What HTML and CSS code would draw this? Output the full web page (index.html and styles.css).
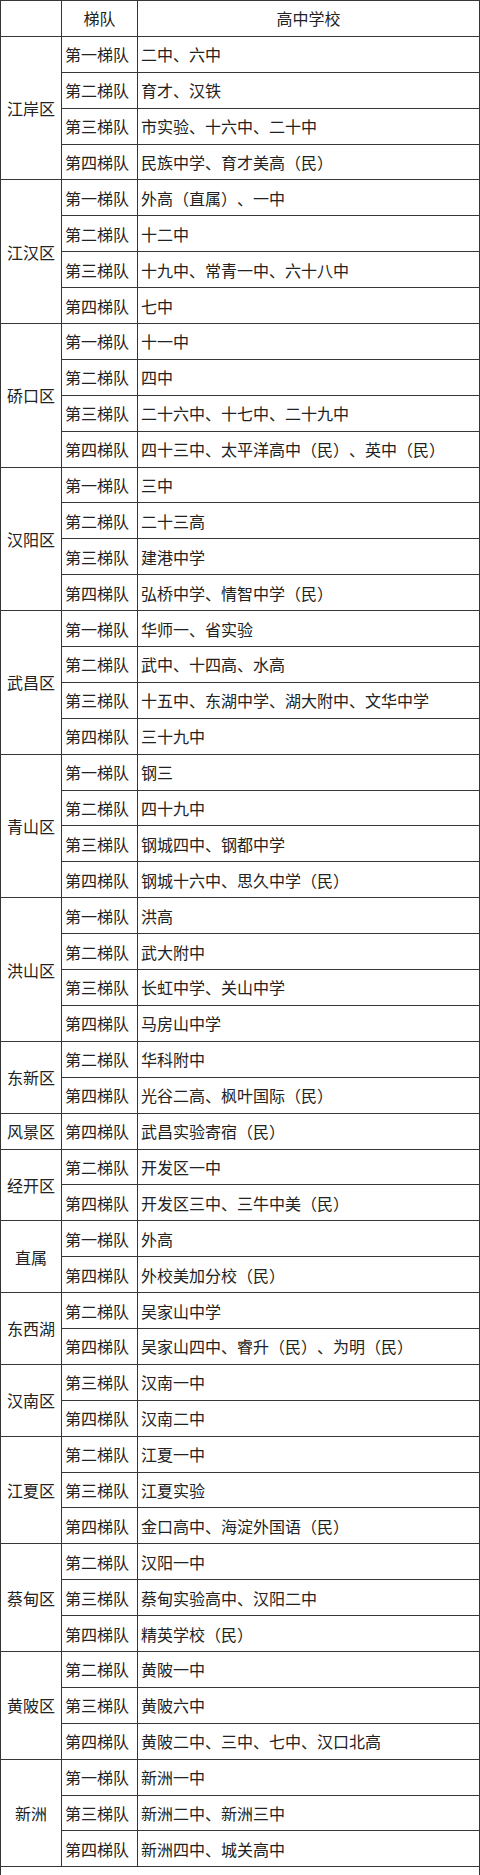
FILE: index.html
```html
<!DOCTYPE html>
<html lang="zh-CN">
<head>
<meta charset="utf-8">
<title>武汉高中梯队</title>
<link rel="stylesheet" href="styles.css">
</head>
<body>
<table class="tier-table">
  <colgroup>
    <col class="col-district">
    <col class="col-tier">
    <col class="col-school">
  </colgroup>
  <thead>
    <tr><th></th><th>梯队</th><th>高中学校</th></tr>
  </thead>
  <tbody>
    <tr><td class="district" rowspan="4">江岸区</td><td>第一梯队</td><td>二中、六中</td></tr>
    <tr><td>第二梯队</td><td>育才、汉铁</td></tr>
    <tr><td>第三梯队</td><td>市实验、十六中、二十中</td></tr>
    <tr><td>第四梯队</td><td>民族中学、育才美高（民）</td></tr>

    <tr><td class="district" rowspan="4">江汉区</td><td>第一梯队</td><td>外高（直属）、一中</td></tr>
    <tr><td>第二梯队</td><td>十二中</td></tr>
    <tr><td>第三梯队</td><td>十九中、常青一中、六十八中</td></tr>
    <tr><td>第四梯队</td><td>七中</td></tr>

    <tr><td class="district" rowspan="4">硚口区</td><td>第一梯队</td><td>十一中</td></tr>
    <tr><td>第二梯队</td><td>四中</td></tr>
    <tr><td>第三梯队</td><td>二十六中、十七中、二十九中</td></tr>
    <tr><td>第四梯队</td><td>四十三中、太平洋高中（民）、英中（民）</td></tr>

    <tr><td class="district" rowspan="4">汉阳区</td><td>第一梯队</td><td>三中</td></tr>
    <tr><td>第二梯队</td><td>二十三高</td></tr>
    <tr><td>第三梯队</td><td>建港中学</td></tr>
    <tr><td>第四梯队</td><td>弘桥中学、情智中学（民）</td></tr>

    <tr><td class="district" rowspan="4">武昌区</td><td>第一梯队</td><td>华师一、省实验</td></tr>
    <tr><td>第二梯队</td><td>武中、十四高、水高</td></tr>
    <tr><td>第三梯队</td><td>十五中、东湖中学、湖大附中、文华中学</td></tr>
    <tr><td>第四梯队</td><td>三十九中</td></tr>

    <tr><td class="district" rowspan="4">青山区</td><td>第一梯队</td><td>钢三</td></tr>
    <tr><td>第二梯队</td><td>四十九中</td></tr>
    <tr><td>第三梯队</td><td>钢城四中、钢都中学</td></tr>
    <tr><td>第四梯队</td><td>钢城十六中、思久中学（民）</td></tr>

    <tr><td class="district" rowspan="4">洪山区</td><td>第一梯队</td><td>洪高</td></tr>
    <tr><td>第二梯队</td><td>武大附中</td></tr>
    <tr><td>第三梯队</td><td>长虹中学、关山中学</td></tr>
    <tr><td>第四梯队</td><td>马房山中学</td></tr>

    <tr><td class="district" rowspan="2">东新区</td><td>第二梯队</td><td>华科附中</td></tr>
    <tr><td>第四梯队</td><td>光谷二高、枫叶国际（民）</td></tr>

    <tr><td class="district">风景区</td><td>第四梯队</td><td>武昌实验寄宿（民）</td></tr>

    <tr><td class="district" rowspan="2">经开区</td><td>第二梯队</td><td>开发区一中</td></tr>
    <tr><td>第四梯队</td><td>开发区三中、三牛中美（民）</td></tr>

    <tr><td class="district" rowspan="2">直属</td><td>第一梯队</td><td>外高</td></tr>
    <tr><td>第四梯队</td><td>外校美加分校（民）</td></tr>

    <tr><td class="district" rowspan="2">东西湖</td><td>第二梯队</td><td>吴家山中学</td></tr>
    <tr><td>第四梯队</td><td>吴家山四中、睿升（民）、为明（民）</td></tr>

    <tr><td class="district" rowspan="2">汉南区</td><td>第三梯队</td><td>汉南一中</td></tr>
    <tr><td>第四梯队</td><td>汉南二中</td></tr>

    <tr><td class="district" rowspan="3">江夏区</td><td>第二梯队</td><td>江夏一中</td></tr>
    <tr><td>第三梯队</td><td>江夏实验</td></tr>
    <tr><td>第四梯队</td><td>金口高中、海淀外国语（民）</td></tr>

    <tr><td class="district" rowspan="3">蔡甸区</td><td>第二梯队</td><td>汉阳一中</td></tr>
    <tr><td>第三梯队</td><td>蔡甸实验高中、汉阳二中</td></tr>
    <tr><td>第四梯队</td><td>精英学校（民）</td></tr>

    <tr><td class="district" rowspan="3">黄陂区</td><td>第二梯队</td><td>黄陂一中</td></tr>
    <tr><td>第三梯队</td><td>黄陂六中</td></tr>
    <tr><td>第四梯队</td><td>黄陂二中、三中、七中、汉口北高</td></tr>

    <tr><td class="district" rowspan="3">新洲</td><td>第一梯队</td><td>新洲一中</td></tr>
    <tr><td>第三梯队</td><td>新洲二中、新洲三中</td></tr>
    <tr><td>第四梯队</td><td>新洲四中、城关高中</td></tr>

    <tr class="blank"><td colspan="3"></td></tr>
  </tbody>
</table>
</body>
</html>
```

FILE: styles.css
```css
html, body {
  margin: 0;
  padding: 0;
  background: #ffffff;
}

.tier-table {
  width: 480px;
  border-collapse: collapse;
  table-layout: fixed;
  font-family: "Noto Sans CJK SC", "Noto Sans", sans-serif;
  font-size: 16px;
  color: #222222;
  text-spacing-trim: space-all;
}

.col-district { width: 61px; }
.col-tier { width: 76px; }

.tier-table th,
.tier-table td {
  border: 1px solid #363636;
  height: 35.9px;
  padding: 0 3px;
  line-height: 20px;
  vertical-align: middle;
  text-align: left;
  white-space: nowrap;
  font-weight: normal;
  box-sizing: border-box;
}

.tier-table th {
  text-align: center;
}

.tier-table td.district {
  text-align: center;
  padding: 0;
}

.tier-table tr.blank td {
  height: 36px;
}
```
